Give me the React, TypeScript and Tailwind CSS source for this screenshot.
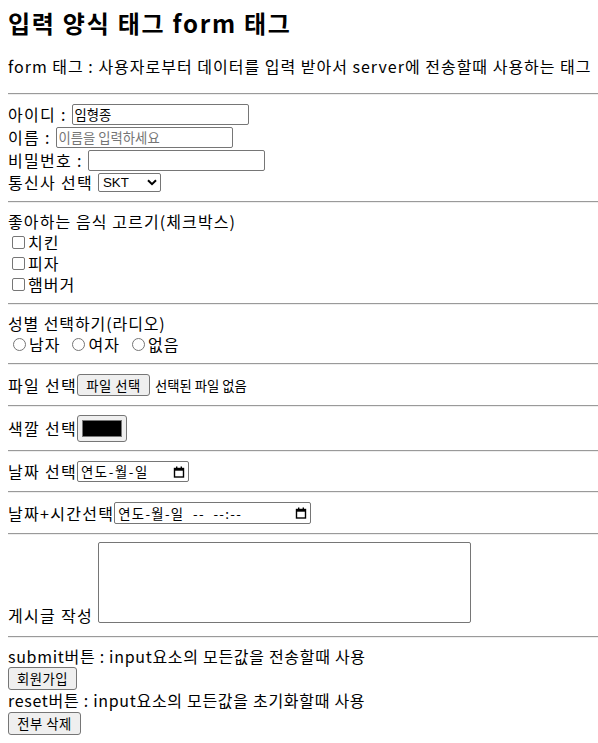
import React from 'react';

const ctrl = "font-['Noto_Sans_CJK_KR',sans-serif] text-[13.33px] text-black";

function Hr() {
  return <div className="my-2 h-[2px] border-t border-b border-t-[#9a9a9a] border-b-[#eeeeee]" />;
}

function Box({ className, children }: { className?: string; children?: React.ReactNode }) {
  return (
    <span className={`inline-flex items-center align-middle border border-[#767676] rounded-[2px] bg-white ${ctrl} ${className ?? ''}`}>
      {children}
    </span>
  );
}

function Check({ label }: { label: string }) {
  return (
    <div className="flex items-center h-[21px]">
      <span className="ml-[4px] mr-[3px] w-[13px] h-[13px] shrink-0 border border-[#767676] rounded-[2px] bg-white" />
      <span className="tracking-[1px]">{label}</span>
    </div>
  );
}

function Radio({ label }: { label: string }) {
  return (
    <span className="inline-flex items-center mr-[7px]">
      <span className="ml-[5px] mr-[3px] w-[13px] h-[13px] shrink-0 border border-[#767676] rounded-full bg-white" />
      <span className="tracking-[1px]">{label}</span>
    </span>
  );
}

function Calendar() {
  return (
    <svg width="12" height="12" viewBox="0 0 12 12" className="shrink-0">
      <rect x="1.5" y="2.5" width="9" height="8.5" fill="none" stroke="#000" strokeWidth="1.4" />
      <rect x="1.5" y="2.5" width="9" height="2.2" fill="#000" />
      <rect x="3" y="0.5" width="1.4" height="3" fill="#000" />
      <rect x="7.6" y="0.5" width="1.4" height="3" fill="#000" />
    </svg>
  );
}

function Btn({ children, className }: { children: React.ReactNode; className?: string }) {
  return (
    <span className={`inline-flex items-center justify-center align-middle border border-[#767676] rounded-[3px] bg-[#efefef] ${ctrl} ${className ?? ''}`}>
      {children}
    </span>
  );
}

const field = `w-[177px] h-[21px] px-[2px] border border-[#767676] rounded-[2px] bg-white ${ctrl}`;

export default function App() {
  return (
    <div className="pt-2 pb-2 pl-2 pr-0 bg-white text-black text-[16px] leading-[21px] font-['Noto_Sans_CJK_KR',sans-serif]">
      <h1 className="mt-[2px] text-[24px] font-bold leading-[26px] tracking-[1.75px]">입력 양식 태그 form 태그</h1>
      <p className="mt-[20px] tracking-[1px] whitespace-nowrap">form 태그 : 사용자로부터 데이터를 입력 받아서 server에 전송할때 사용하는 태그</p>
      <div className="mt-4" />
      <Hr />

      <div className="flex items-center h-[23px]">
        <span className="tracking-[1.3px] whitespace-pre">아이디 : </span>
        <input readOnly defaultValue="임형종" className={field} />
      </div>
      <div className="flex items-center h-[23px]">
        <span className="tracking-[1.3px] whitespace-pre">이름 : </span>
        <input readOnly placeholder="이름을 입력하세요" className={`${field} placeholder:text-[#757575]`} />
      </div>
      <div className="flex items-center h-[23px]">
        <span className="tracking-[1.3px] whitespace-pre">비밀번호 : </span>
        <input readOnly type="password" className={field} />
      </div>
      <div className="flex items-center h-[21px]">
        <span className="tracking-[1.3px] whitespace-pre">통신사 선택 </span>
        <Box className="w-[63px] h-[19px] pl-[4px] pr-[3px] justify-between">
          <span className="font-['Liberation_Sans',sans-serif]">SKT</span>
          <svg width="10" height="7" viewBox="0 0 10 7"><path d="M1 1.2 L5 5.2 L9 1.2" fill="none" stroke="#000" strokeWidth="2" /></svg>
        </Box>
      </div>
      <Hr />

      <div className="tracking-[1.1px]">좋아하는 음식 고르기(체크박스)</div>
      <Check label="치킨" />
      <Check label="피자" />
      <Check label="햄버거" />
      <Hr />

      <div className="tracking-[0.9px]">성별 선택하기(라디오)</div>
      <div className="flex items-center h-[21px]">
        <Radio label="남자" />
        <Radio label="여자" />
        <Radio label="없음" />
      </div>
      <Hr />

      <div className="flex items-center h-[24px]">
        <span className="tracking-[1.3px]">파일 선택</span>
        <Btn className="w-[73px] h-[22px] tracking-[0.5px]">파일 선택</Btn>
        <span className={`ml-[5px] ${ctrl}`}>선택된 파일 없음</span>
      </div>
      <Hr />

      <div className="flex items-center h-[27px]">
        <span className="tracking-[1.3px]">색깔 선택</span>
        <Btn className="w-[50px] h-[27px]">
          <span className="w-[40px] h-[17px] bg-black border border-[#777]" />
        </Btn>
      </div>
      <Hr />

      <div className="flex items-center h-[23px]">
        <span className="tracking-[1.3px]">날짜 선택</span>
        <Box className="w-[112px] h-[21px] pl-[3px] pr-[3px] justify-between">
          <span className="tracking-[1.6px]">연도-월-일</span>
          <Calendar />
        </Box>
      </div>
      <Hr />

      <div className="flex items-center h-[24px]">
        <span className="tracking-[1.3px]">날짜+시간선택</span>
        <Box className="w-[197px] h-[22px] pl-[3px] pr-[3px] justify-between">
          <span className="whitespace-pre tracking-[1.3px]">연도-월-일  --  --:--</span>
          <Calendar />
        </Box>
      </div>
      <Hr />

      <div className="flex items-end h-[85px]">
        <span className="mb-[2px] tracking-[1.3px] whitespace-pre">게시글 작성 </span>
        <textarea readOnly className={`w-[373px] h-[81px] mb-[5px] border border-[#767676] rounded-[2px] resize-none ${ctrl}`} />
      </div>
      <Hr />

      <div className="tracking-[0.7px]">submit버튼 : input요소의 모든값을 전송할때 사용</div>
      <div className="flex items-center h-[23px]">
        <Btn className="w-[69px] h-[23px] tracking-[0.5px]">회원가입</Btn>
      </div>
      <div className="tracking-[0.7px]">reset버튼 : input요소의 모든값을 초기화할때 사용</div>
      <div className="flex items-center h-[24px]">
        <Btn className="w-[73px] h-[23px] tracking-[0.5px]">전부 삭제</Btn>
      </div>
    </div>
  );
}
